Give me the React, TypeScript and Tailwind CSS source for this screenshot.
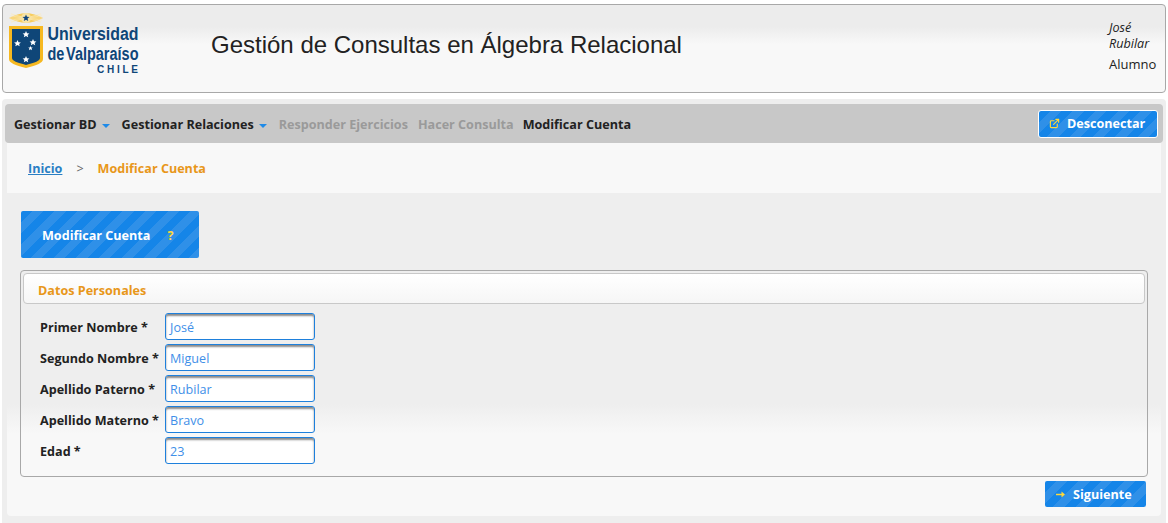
import { ExternalLink } from "lucide-react";

const stripes =
  "bg-[repeating-linear-gradient(135deg,#1585e8_0px,#1585e8_8px,#2f90e8_8px,#2f90e8_16px)]";

const fields = [
  { label: "Primer Nombre *", value: "José" },
  { label: "Segundo Nombre *", value: "Miguel" },
  { label: "Apellido Paterno *", value: "Rubilar" },
  { label: "Apellido Materno *", value: "Bravo" },
  { label: "Edad *", value: "23" },
];

// white cuts in the fan above the shield
const rays = [-20, -10, 0, 10, 20];

function Caret() {
  return (
    <span className="ml-[5px] inline-block h-0 w-0 border-x-[4px] border-t-[4px] border-x-transparent border-t-[#1e8ae8] align-middle" />
  );
}

function Logo() {
  return (
    <svg width="196" height="63" viewBox="0 0 196 63" className="block">
      <path d="M0 5 Q17 -4.5 34 5 Q17 14.5 0 5 Z" fill="#f7cd5e" />
      <g stroke="#fbeab8" strokeWidth="0.7">
        {rays.map((a) => {
          const dx = 16 * Math.cos((a * Math.PI) / 180);
          const dy = 12 * Math.sin((a * Math.PI) / 180);
          return (
            <g key={a}>
              <line x1={17} y1={5} x2={17 + dx} y2={5 + dy} />
              <line x1={17} y1={5} x2={17 - dx} y2={5 + dy} />
            </g>
          );
        })}
      </g>
      <circle cx="17" cy="5" r="5" fill="#f8e3a4" />
      <path d="M17 1.5 l1 2.3 2.5 .2 -1.9 1.6 .6 2.4 -2.2 -1.3 -2.2 1.3 .6 -2.4 -1.9 -1.6 2.5 -.2 z" fill="#12467e" />
      {/* shield */}
      <path d="M0 13 H34 V46 C34 50 28 52 17 55 C6 52 0 50 0 46 Z" fill="#f6b820" />
      <path d="M3 16 H31 V45 C31 48 26 49.5 17 52 C8 49.5 3 48 3 45 Z" fill="#0f4678" />
      <g fill="#ffffff">
        <path d="M17 18 l1 2.2 2.4 .2 -1.8 1.5 .6 2.4 -2.2 -1.3 -2.2 1.3 .6 -2.4 -1.8 -1.5 2.4 -.2 z" />
        <path d="M8.5 27 l1 2.2 2.4 .2 -1.8 1.5 .6 2.4 -2.2 -1.3 -2.2 1.3 .6 -2.4 -1.8 -1.5 2.4 -.2 z" />
        <path d="M24 26 l1 2.2 2.4 .2 -1.8 1.5 .6 2.4 -2.2 -1.3 -2.2 1.3 .6 -2.4 -1.8 -1.5 2.4 -.2 z" />
        <path d="M21.5 33 l.7 1.5 1.6 .1 -1.2 1 .4 1.6 -1.5 -.9 -1.5 .9 .4 -1.6 -1.2 -1 1.6 -.1 z" />
        <path d="M17 43 l1 2.2 2.4 .2 -1.8 1.5 .6 2.4 -2.2 -1.3 -2.2 1.3 .6 -2.4 -1.8 -1.5 2.4 -.2 z" />
      </g>
      {/* wordmark */}
      <g fill="#0f4678" fontFamily="'Liberation Sans', sans-serif" fontWeight="700">
        <text x="38.5" y="26.5" fontSize="18" textLength="91" lengthAdjust="spacingAndGlyphs">Universidad</text>
        <text x="38.5" y="46.5" fontSize="18" wordSpacing="-3" textLength="91" lengthAdjust="spacingAndGlyphs">de Valparaíso</text>
        <text x="88" y="60" fontSize="10" textLength="41" lengthAdjust="spacing">CHILE</text>
      </g>
    </svg>
  );
}

export default function App() {
  return (
    <div className="h-[523px] w-[1168px] overflow-hidden bg-white font-['Open_Sans','Noto_Sans',sans-serif] text-[12.6px] text-[#222]">
      {/* Header */}
      <header className="mx-[2px] mt-[4px] flex h-[89px] items-start rounded-[4px] border border-[#a8a8a8] bg-[linear-gradient(180deg,#ececec_0%,#ececec_25%,#f8f8f8_45%,#f8f8f8_100%)]">
        <div className="ml-[6px] mt-[8px] w-[202px] shrink-0">
          <Logo />
        </div>
        <h1 className="mt-[26px] flex-1 font-['Liberation_Sans',sans-serif] text-2xl leading-[28px] text-[#222]">
          Gestión de Consultas en Álgebra Relacional
        </h1>
        <div className="mr-[9px] mt-[15px] w-[47px]">
          <p className="text-[12.6px] leading-[16px] italic">José Rubilar</p>
          <p className="mt-[4px] text-[13px] leading-[16px]">Alumno</p>
        </div>
      </header>

      {/* Main */}
      <div className="mx-[2px] mt-[6px] h-[424px] rounded-t-[4px] bg-[#eeeeee] px-[3px] pt-[5px]">
        <nav className="flex h-[39px] items-center rounded-[4px] bg-[#c8c8c8] pl-[9px] pr-[5px] font-bold">
          <a className="pt-[4px] text-[#222]">
            Gestionar BD
            <Caret />
          </a>
          <a className="ml-[12px] pt-[4px] text-[#222]">
            Gestionar Relaciones
            <Caret />
          </a>
          <a className="ml-[12px] pt-[4px] text-[#9a9a9a]">Responder Ejercicios</a>
          <a className="ml-[10px] pt-[4px] text-[#9a9a9a]">Hacer Consulta</a>
          <a className="ml-[9px] pt-[4px] text-[#222]">Modificar Cuenta</a>
          <button className={`ml-auto flex h-[28px] w-[120px] items-center rounded-[3px] border border-white pl-[10px] font-bold text-white ${stripes}`}>
            <ExternalLink size={11} strokeWidth={2.5} className="text-[#ffd83a]" />
            <span className="ml-[7px] pt-[2px]">Desconectar</span>
          </button>
        </nav>

        <div className="mx-[2px] h-[373px] rounded-b-[4px] bg-[linear-gradient(180deg,#f8f8f8_0%,#f8f8f8_13.4%,#eeeeee_13.4%,#eeeeee_70%,#f8f8f8_78%,#f8f8f8_100%)]">
          {/* Breadcrumb */}
          <div className="flex h-[50px] items-center pl-[21px] pt-[2px] font-bold">
            <a className="text-[#2a7fc4] underline">Inicio</a>
            <span className="ml-[14px] font-normal text-[#666]">&gt;</span>
            <span className="ml-[14px] text-[#e8971a]">Modificar Cuenta</span>
          </div>

          <div className={`ml-[14px] mt-[18px] flex h-[47px] w-[178px] items-center rounded-[2px] pl-[21px] pt-[4px] font-bold text-white ${stripes}`}>
            Modificar Cuenta
            <span className="ml-[17px] text-[#ffd83a]">?</span>
          </div>

          {/* Datos personales */}
          <section className="ml-[13px] mt-[12px] h-[207px] w-[1128px] rounded-[4px] border border-[#a8a8a8] px-[2px] pt-[2px]">
            <div className="flex h-[31px] items-center rounded-[4px] border border-[#c8c8c8] bg-[linear-gradient(180deg,#ffffff,#f6f6f6)] pl-[14px] pt-[6px] font-bold text-[#e8971a]">
              Datos Personales
            </div>
            <div className="mt-[9px] flex flex-col gap-[4px] pl-[17px]">
              {fields.map((f) => (
                <div key={f.label} className="flex h-[27px] items-center">
                  <label className="w-[125px] pt-[4px] font-bold text-[#222]">{f.label}</label>
                  <div className="flex h-[27px] w-[150px] items-center rounded-[3px] border border-[#1e80dc] bg-white pl-[4px] pt-[4px] text-[#3f8fe8] shadow-[inset_0_2px_2px_#8a8a8a]">
                    {f.value}
                  </div>
                </div>
              ))}
            </div>
          </section>

          <div className="mr-[15px] mt-[4px] flex justify-end">
            <button className={`flex h-[26px] w-[101px] items-center rounded-[2px] pl-[11px] font-bold text-white ${stripes}`}>
              <svg width="9" height="7" viewBox="0 0 9 7" className="block">
                <path d="M0 2.7 H5.5 V0.5 L9 3.5 L5.5 6.5 V4.3 H0 Z" fill="#ffd83a" />
              </svg>
              <span className="ml-[8px] pt-[2px]">Siguiente</span>
            </button>
          </div>
        </div>
      </div>
    </div>
  );
}
